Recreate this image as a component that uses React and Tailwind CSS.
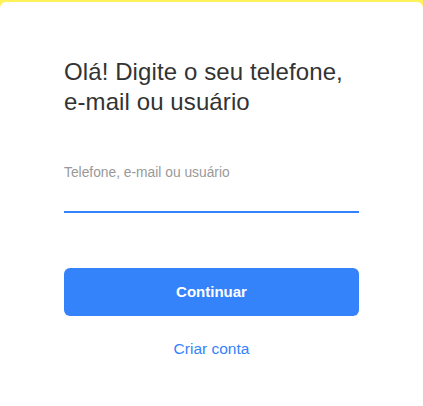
export default function App() {
  return (
    <div className="min-h-[406px] bg-[#fff159] pt-[2px] font-['Liberation_Sans',Arial,sans-serif]">
      <div className="min-h-[404px] rounded-t-[6px] bg-white px-16 pt-[55px]">
        <h1 className="text-[24px] leading-[30px] text-[#333333] tracking-[0.1px]">
          Olá! Digite o seu telefone,
          <br />
          e-mail ou usuário
        </h1>

        <div className="mt-[48px]">
          <label className="block text-[13.8px] leading-4 text-[#999999]">
            Telefone, e-mail ou usuário
          </label>
          <input
            type="text"
            className="mt-[12px] block h-[20px] w-full border-0 border-b-2 border-[#3483fa] outline-none text-[15px]"
          />
        </div>

        <button className="mt-[55px] h-12 w-full rounded-[6px] bg-[#3483fa] text-[15px] font-bold text-white">
          Continuar
        </button>

        <div className="mt-[21px] text-center">
          <a href="#" className="text-[15.5px] text-[#3483fa]">
            Criar conta
          </a>
        </div>
      </div>
    </div>
  );
}
